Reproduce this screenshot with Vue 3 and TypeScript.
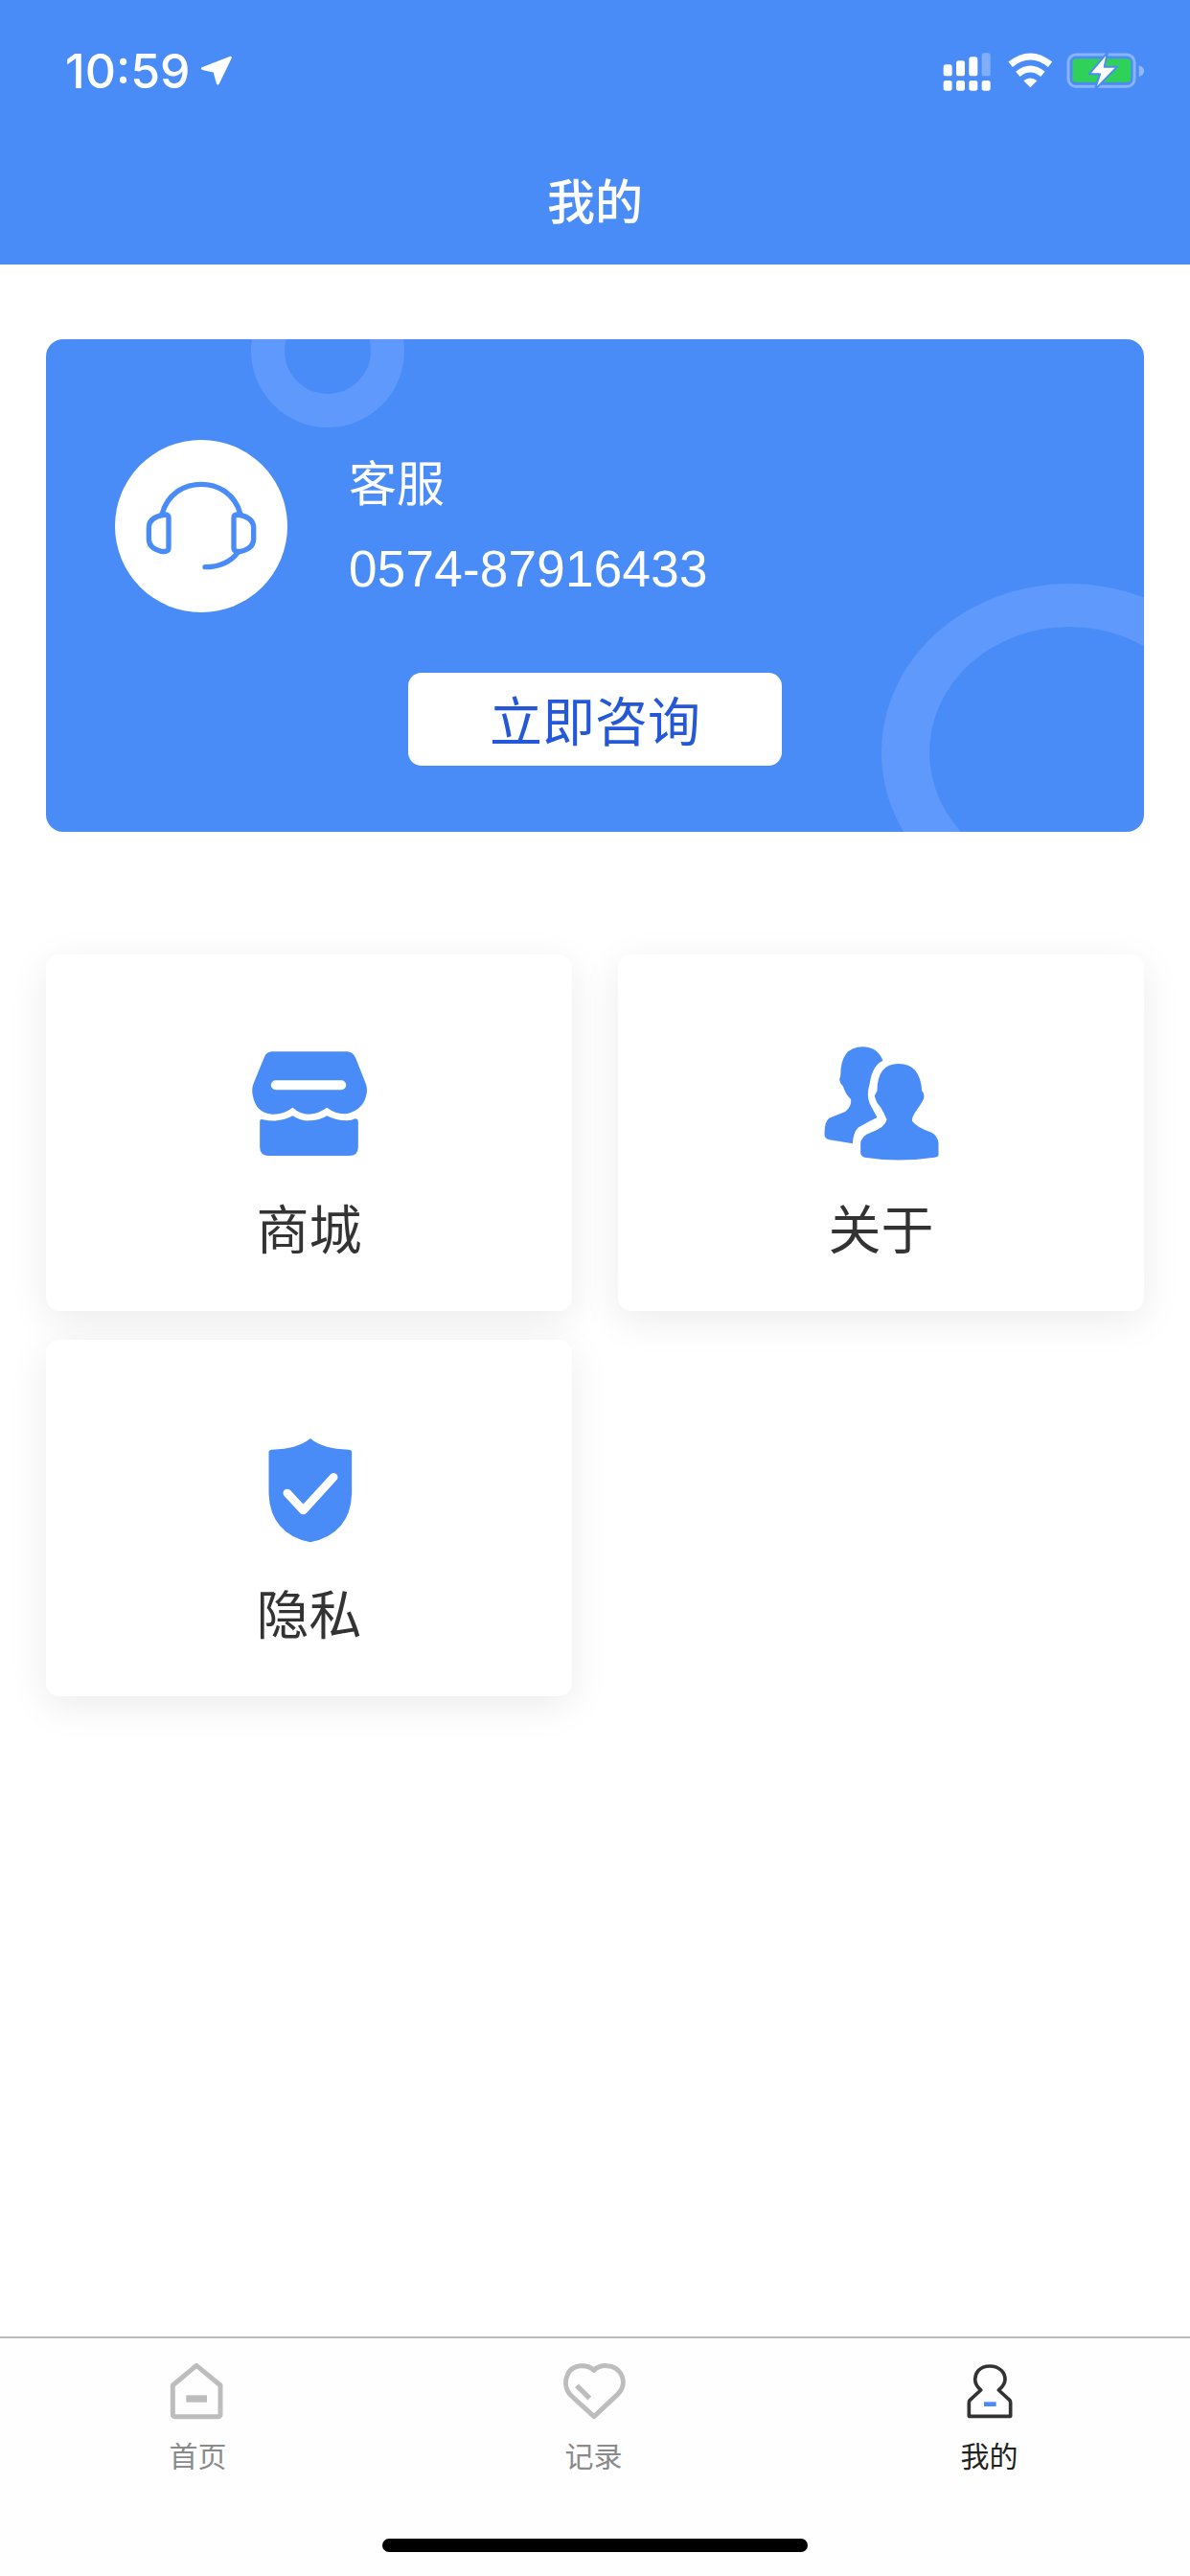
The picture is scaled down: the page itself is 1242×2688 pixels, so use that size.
<script setup lang="ts">
interface Tab { label: string; active?: boolean }
const tabs: Tab[] = [{ label: '首页' }, { label: '记录' }, { label: '我的', active: true }]
</script>

<template>
  <div class="page">
    <header class="header">
      <div class="status">
        <div class="time-wrap">
          <span class="time">10:59</span>
          <svg class="arrow" viewBox="0 0 40 40" width="37" height="37">
            <path d="M36 3 L4 15.500 Q2 17 4.500 18.500 L17 21 L20.500 34 Q22 36 23.500 34 L37.500 5 Q38 2.500 36 3Z" fill="#fff" />
          </svg>
        </div>
        <svg class="status-icons" viewBox="0 0 1026 360" width="342" height="120">
          <g fill="#fff">
            <rect x="248" y="142" width="27" height="36" rx="8" />
            <rect x="288" y="130" width="27" height="48" rx="8" />
            <rect x="328" y="118" width="27" height="60" rx="8" />
            <rect x="368" y="106" width="27" height="72" rx="8" opacity=".3" />
            <rect x="248" y="192" width="27" height="32" rx="8" />
            <rect x="288" y="192" width="27" height="32" rx="8" />
            <rect x="328" y="192" width="27" height="32" rx="8" />
            <rect x="368" y="192" width="27" height="32" rx="8" />
            <path d="M520 214 L499 193 Q520 176 541 193Z" />
          </g>
          <g fill="none" stroke="#fff" stroke-width="21">
            <path d="M458 142 Q520 92 582 142" />
            <path d="M481 172 Q520 140 559 172" />
          </g>
          <rect x="639" y="111" width="207" height="100" rx="24" fill="none" stroke="#fff" stroke-opacity=".35" stroke-width="9" />
          <path d="M860 145 Q876 150 876 162 Q876 175 860 180Z" fill="#fff" fill-opacity=".4" />
          <rect x="652" y="124" width="183" height="73" rx="12" fill="#30d158" />
          <path d="M762 104 L704 172 L738 172 L722 221 L792 149 L752 149Z" fill="#fff" stroke="#4a8cf7" stroke-width="6" stroke-linejoin="round" />
        </svg>
      </div>
      <h1 class="title">我的</h1>
    </header>

    <main class="main">
      <section class="service">
        <i class="ring ring-small"></i>
        <i class="ring ring-large"></i>
        <div class="service-info">
          <div class="avatar">
            <svg viewBox="60 60 540 540" width="180" height="180" fill="none" stroke="#4a8cf7" stroke-width="16" stroke-linecap="round" stroke-linejoin="round">
              <path d="M208 290 C225 230 275 199 330 199 C385 199 435 230 452 290" />
              <path d="M228 303 Q228 294 215 294 Q166 302 166 335 V370 Q166 400 205 409 Q228 412 228 398Z" />
              <path d="M432 303 Q432 294 445 294 Q494 302 494 335 V370 Q494 400 455 409 Q432 412 432 398Z" />
              <path d="M445 412 Q410 458 342 458" />
            </svg>
          </div>
          <div class="service-text">
            <div class="service-name">客服</div>
            <div class="service-phone">0574-87916433</div>
          </div>
        </div>
        <button class="consult">立即咨询</button>
      </section>

      <section class="grid">
        <div class="tile">
          <svg class="tile-icon" viewBox="7.500 0 600 540" width="200" height="180">
            <path fill="#4a8cf7" d="M190 112 H425 Q443 112 452 132 L483 210 Q490 228 486 245 Q478 290 430 305 Q395 312 362 287 Q340 305 305 308 Q278 308 255 287 Q225 310 190 308 Q140 305 130 250 Q125 228 133 210 L165 132 Q172 112 190 112Z" />
            <rect x="187" y="202" width="235" height="30" rx="15" fill="#fff" />
            <path fill="#4a8cf7" d="M152 330 Q152 322 162 325 Q185 330 205 328 Q235 325 255 313 Q280 330 305 328 Q340 328 362 313 Q390 328 425 328 Q440 328 450 322 Q460 322 460 332 V410 Q460 438 432 438 H180 Q152 438 152 410Z" />
          </svg>
          <div class="tile-label">商城</div>
        </div>
        <div class="tile">
          <svg class="tile-icon" viewBox="-1.500 0 600 540" width="200" height="180">
            <path fill="#4a8cf7" d="M240 97 Q285 97 303 140 Q270 155 262 210 Q250 250 262 275 Q275 300 285 318 Q250 335 225 350 Q210 365 208 400 L135 388 Q120 385 120 370 Q120 330 135 320 Q160 310 185 300 Q205 285 203 262 Q185 245 178 220 Q162 205 170 188 Q170 97 240 97Z" />
            <path fill="#4a8cf7" d="M352 150 Q420 150 425 235 Q435 245 430 262 Q420 280 412 290 Q390 320 395 330 Q410 350 455 365 Q475 375 477 400 L477 435 Q477 442 465 443 Q350 460 245 443 Q235 440 233 430 L233 400 Q235 375 265 365 Q310 350 315 325 Q305 300 295 285 Q280 270 277 250 L285 235 Q285 150 352 150Z" />
          </svg>
          <div class="tile-label">关于</div>
        </div>
        <div class="tile">
          <svg class="tile-icon" viewBox="7.500 -30 600 540" width="200" height="180">
            <path fill="#4a8cf7" d="M310 87 Q270 120 190 122 Q180 122 180 130 V260 Q185 385 310 412 Q435 385 440 260 V130 Q440 122 430 122 Q350 120 310 87Z" />
            <path d="M238 258 L288 312 L383 208" fill="none" stroke="#fff" stroke-width="26" stroke-linecap="round" stroke-linejoin="round" />
          </svg>
          <div class="tile-label">隐私</div>
        </div>
      </section>
    </main>

    <footer class="tabbar">
      <nav class="tabs">
        <div v-for="(tab, i) in tabs" :key="tab.label" class="tab" :class="{ active: tab.active }">
          <svg v-if="i === 0" viewBox="110 105 240 240" width="80" height="80">
            <path d="M224 145 L299 207 V298 Q299 305 292 305 H157 Q150 305 150 298 V207Z" fill="none" stroke="#bdbdbd" stroke-width="15" stroke-linejoin="round" />
            <rect x="192" y="238" width="65" height="22" fill="#bdbdbd" />
          </svg>
          <svg v-else-if="i === 1" viewBox="116 105 240 240" width="80" height="80">
            <path d="M236 160 C215 140 170 140 155 170 C140 200 150 225 165 240 L236 305 L310 235 C325 220 335 195 318 168 C300 140 255 140 236 160Z" fill="none" stroke="#bdbdbd" stroke-width="15" stroke-linejoin="round" />
            <path d="M182 208 L222 248" stroke="#bdbdbd" stroke-width="16" />
          </svg>
          <svg v-else viewBox="128 105 240 240" width="80" height="80">
            <path d="M248 147 C215 147 202 170 202 188 C202 205 212 215 220 222 L186 253 Q183 256 183 262 V304 H313 V262 Q313 256 310 253 L276 222 C284 215 296 205 296 188 C296 170 281 147 248 147Z" fill="none" stroke="#333" stroke-width="11" stroke-linejoin="round" />
            <rect x="230" y="259" width="38" height="14" fill="#4a8cf7" />
          </svg>
          <span class="tab-label">{{ tab.label }}</span>
        </div>
      </nav>
      <div class="home-bar"></div>
    </footer>
  </div>
</template>

<style scoped>
.page {
  width: 1242px;
  height: 2688px;
  display: flex;
  flex-direction: column;
  background: #fff;
  font-family: "Noto Sans CJK SC", "Liberation Sans", sans-serif;
  overflow: hidden;
}
.header {
  height: 276px;
  background: #4a8cf7;
  flex: none;
}
.status {
  height: 148px;
  display: flex;
  justify-content: space-between;
  align-items: center;
  padding-left: 68px;
}
.time-wrap {
  display: flex;
  align-items: center;
  gap: 8px;
}
.time {
  font-family: Inter, "Liberation Sans", sans-serif;
  font-size: 50px;
  font-weight: 500;
  line-height: 60px;
  color: #fff;
}
.status-icons {
  margin: 12px 0 0;
  transform: translateX(2px);
}
.title {
  margin: 0;
  height: 118px;
  line-height: 118px;
  text-align: center;
  font-size: 50px;
  font-weight: 500;
  color: #fff;
}
.main {
  flex: 1;
  padding: 78px 48px 0;
}
.service {
  position: relative;
  height: 514px;
  box-sizing: border-box;
  padding: 105px 72px 0;
  background: #4a8cf7;
  border-radius: 18px;
  overflow: hidden;
}
.ring {
  position: absolute;
  box-sizing: border-box;
  border-radius: 50%;
  border-style: solid;
  border-color: #5f99fb;
}
.ring-small {
  left: 214px;
  top: -68px;
  width: 160px;
  height: 160px;
  border-width: 35px;
}
.ring-large {
  left: 872px;
  top: 255px;
  width: 392px;
  height: 352px;
  border-width: 45px 50px;
}
.service-info {
  position: relative;
  display: flex;
  align-items: center;
  gap: 64px;
}
.avatar {
  width: 180px;
  height: 180px;
  border-radius: 50%;
  background: #fff;
}
.avatar svg {
  display: block;
}
.service-text {
  color: #fff;
}
.service-name {
  font-size: 50px;
  line-height: 82px;
  margin-bottom: 6px;
}
.service-phone {
  font-family: "Liberation Sans", sans-serif;
  font-size: 53px;
  letter-spacing: 0.25px;
  line-height: 91px;
}
.consult {
  position: relative;
  display: block;
  width: 390px;
  height: 97px;
  margin: 63px auto 0;
  padding: 0 0 3px;
  border: 0;
  border-radius: 14px;
  background: #fff;
  color: #2458d8;
  font-family: inherit;
  font-size: 55px;
}
.grid {
  margin-top: 128px;
  display: grid;
  grid-template-columns: 549px 549px;
  column-gap: 48px;
  row-gap: 30px;
}
.tile {
  height: 372px;
  box-sizing: border-box;
  padding-top: 64px;
  display: flex;
  flex-direction: column;
  align-items: center;
  background: #fff;
  border-radius: 14px;
  box-shadow: 0 10px 40px rgba(0, 0, 0, 0.08);
}
.tile-label {
  margin-top: 9px;
  font-size: 55px;
  line-height: 60px;
  color: #333;
}
.tabbar {
  flex: none;
  height: 250px;
  box-sizing: border-box;
  border-top: 2px solid #bbb;
  background: #fefefe;
}
.tabs {
  display: grid;
  grid-template-columns: repeat(3, 1fr);
  padding: 15px 3px 0 0;
}
.tab {
  display: flex;
  flex-direction: column;
  align-items: center;
}
.tab-label {
  margin-top: 6px;
  font-size: 30px;
  line-height: 40px;
  color: #8a8a8a;
}
.tab.active .tab-label {
  color: #222;
}
.home-bar {
  width: 444px;
  height: 14px;
  margin: 68px auto 0;
  border-radius: 7px;
  background: #000;
}
</style>
